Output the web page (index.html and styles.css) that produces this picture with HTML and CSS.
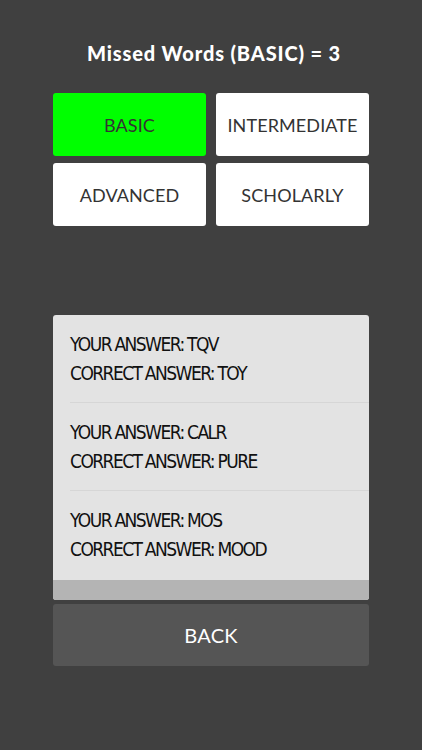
FILE: index.html
```html
<!DOCTYPE html>
<html>
<head>
<meta charset="utf-8">
<link rel="stylesheet" href="styles.css">
</head>
<body>
<div class="screen">
  <h1 class="title">Missed Words (BASIC) = 3</h1>
  <div class="levels">
    <div class="level active">BASIC</div>
    <div class="level">INTERMEDIATE</div>
    <div class="level">ADVANCED</div>
    <div class="level">SCHOLARLY</div>
  </div>
  <div class="list">
    <div class="item">
      <div class="line">YOUR ANSWER: TQV</div>
      <div class="line">CORRECT ANSWER: TOY</div>
    </div>
    <div class="item">
      <div class="line">YOUR ANSWER: CALR</div>
      <div class="line">CORRECT ANSWER: PURE</div>
    </div>
    <div class="item last">
      <div class="line">YOUR ANSWER: MOS</div>
      <div class="line">CORRECT ANSWER: MOOD</div>
    </div>
    <div class="list-foot"></div>
  </div>
  <div class="back">BACK</div>
</div>
</body>
</html>
```
FILE: styles.css
```css
html, body {
  margin: 0;
  padding: 0;
  background: #404040;
}
.screen {
  width: 422px;
  height: 750px;
  box-sizing: border-box;
  padding: 40px 53px 0 53px;
  font-family: "Lato", "DejaVu Sans", sans-serif;
}
.title {
  margin: 0;
  padding-left: 6px;
  height: 26px;
  line-height: 26px;
  text-align: center;
  color: #ffffff;
  font-size: 20px;
  font-weight: 900;
  letter-spacing: 0.85px;
}
.levels {
  margin-top: 27px;
  display: grid;
  grid-template-columns: 1fr 1fr;
  column-gap: 10px;
  row-gap: 7px;
}
.level {
  height: 63px;
  background: #ffffff;
  border-radius: 3px;
  display: flex;
  align-items: center;
  justify-content: center;
  color: #333333;
  font-size: 18px;
  letter-spacing: 0.1px;
}
.level.active {
  background: #00ff00;
}
.list {
  margin-top: 89px;
  background: #e3e3e3;
  border-radius: 3px;
  overflow: hidden;
  height: 285px;
  display: flex;
  flex-direction: column;
}
.item {
  margin-left: 17px;
  height: 88px;
  border-bottom: 1px solid #d6d6d6;
  box-sizing: border-box;
  padding-top: 15px;
  font-family: "DejaVu Sans Condensed", "DejaVu Sans", sans-serif;
  font-size: 19px;
  color: #111111;
  letter-spacing: -1.55px;
  word-spacing: -0.5px;
}
.item.last {
  border-bottom: none;
  height: 87px;
}
.line {
  height: 29px;
  line-height: 29px;
}
.list-foot {
  margin-top: auto;
  height: 20px;
  background: #b4b4b4;
}
.back {
  margin-top: 4px;
  height: 62px;
  background: #555555;
  border-radius: 3px;
  display: flex;
  align-items: center;
  justify-content: center;
  color: #ffffff;
  font-size: 20px;
  letter-spacing: 0.3px;
}
```
